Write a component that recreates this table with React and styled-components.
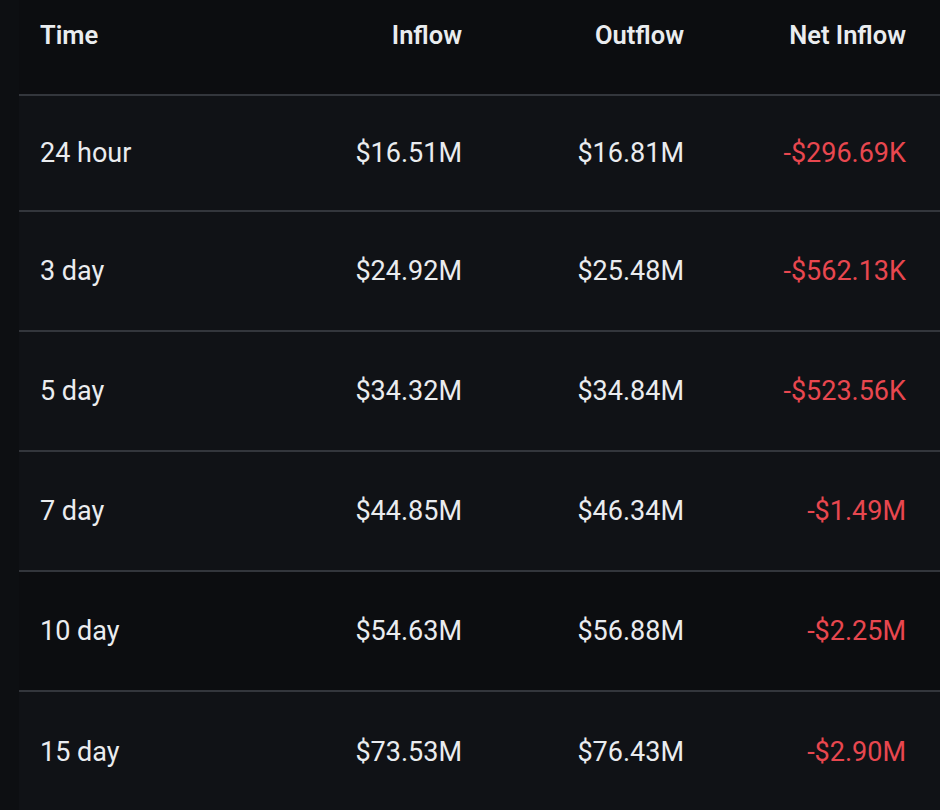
import React from 'react';
import styled, { createGlobalStyle } from 'styled-components';

const GlobalStyle = createGlobalStyle`
    html, body {
        margin: 0;
        padding: 0;
        background: #0d0f12;
    }
    body {
        font-family: Roboto, "Noto Sans", sans-serif;
        -webkit-font-smoothing: antialiased;
    }
`;

const Page = styled.div`
    box-sizing: border-box;
    width: 940px;
    height: 810px;
    overflow: hidden;
    padding-left: 19px;
`;

const Table = styled.div`
    display: flex;
    flex-direction: column;
    background: #101216;
`;

const Row = styled.div`
    box-sizing: border-box;
    display: grid;
    grid-template-columns: 200px 222px 222px 222px;
    align-items: center;
    padding: 0 34px 0 21px;
    height: ${({ height }) => height}px;
    flex-shrink: 0;
    background: ${({ dim }) => dim ? '#0c0d10' : 'transparent'};
    border-bottom: ${({ last }) => last ? 'none' : '2px solid #33363c'};
`;

const HeaderRow = styled(Row)`
    align-items: start;
    padding-top: 20px;
`;

const HeadCell = styled.div`
    color: #eaecef;
    font-size: 25.5px;
    font-weight: 600;
    text-align: ${({ left }) => left ? 'left' : 'right'};
    white-space: nowrap;
`;

const Cell = styled.div`
    color: ${({ negative }) => negative ? '#e8474f' : '#eaecef'};
    font-size: 27px;
    font-weight: 400;
    text-align: ${({ left }) => left ? 'left' : 'right'};
    white-space: nowrap;
`;

const rows = [
    { time: '24 hour', inflow: '$16.51M', outflow: '$16.81M', net: '-$296.69K' },
    { time: '3 day', inflow: '$24.92M', outflow: '$25.48M', net: '-$562.13K' },
    { time: '5 day', inflow: '$34.32M', outflow: '$34.84M', net: '-$523.56K' },
    { time: '7 day', inflow: '$44.85M', outflow: '$46.34M', net: '-$1.49M' },
    { time: '10 day', inflow: '$54.63M', outflow: '$56.88M', net: '-$2.25M', hovered: true },
    { time: '15 day', inflow: '$73.53M', outflow: '$76.43M', net: '-$2.90M' },
];

export default function App() {
    return (
        <>
            <GlobalStyle />
            <Page>
                <Table>
                    <HeaderRow height={96} dim>
                        <HeadCell left>Time</HeadCell>
                        <HeadCell>Inflow</HeadCell>
                        <HeadCell>Outflow</HeadCell>
                        <HeadCell>Net Inflow</HeadCell>
                    </HeaderRow>
                    {rows.map((r, i) => (
                        <Row
                            key={r.time}
                            height={i === 0 ? 116 : 120}
                            dim={r.hovered}
                            last={i === rows.length - 1}
                        >
                            <Cell left>{r.time}</Cell>
                            <Cell>{r.inflow}</Cell>
                            <Cell>{r.outflow}</Cell>
                            <Cell negative={r.net.startsWith('-')}>{r.net}</Cell>
                        </Row>
                    ))}
                </Table>
            </Page>
        </>
    );
}
